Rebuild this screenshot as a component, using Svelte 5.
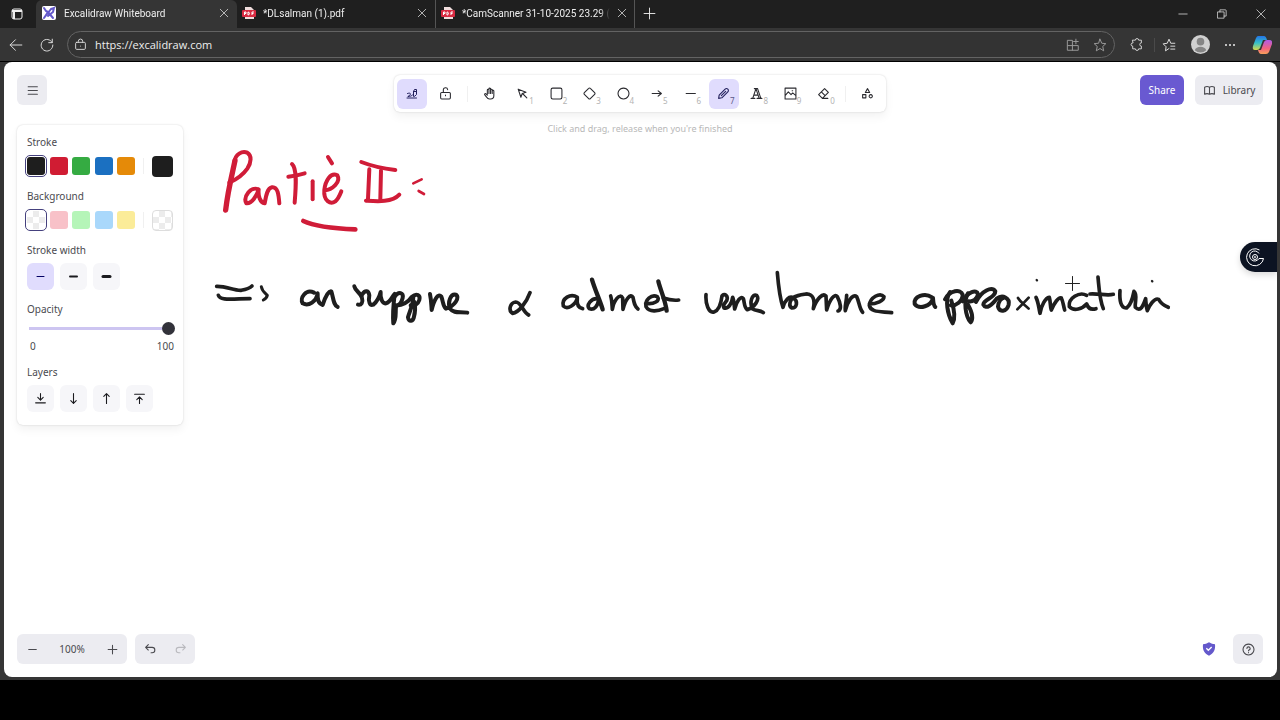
<script lang="ts">
	interface Stroke {
		d: string;
		w: number;
	}

	interface Scribble {
		x: number;
		y: number;
		color: string;
		label: string;
		strokes: Stroke[];
	}

	const pen = (w: number, ...paths: string[]): Stroke[] => paths.map((d) => ({ d, w }));

	// Tool state
	let activeTool = $state('draw');
	let penMode = $state(true);
	let opacity = $state(100);
	let strokeColor = $state('#1e1e1e');
	let background = $state('transparent');
	let strokeWidth = $state(1);
	let url = $state('https://excalidraw.com');

	const tabs = [
		{ title: 'Excalidraw Whiteboard', icon: 'logo', active: true },
		{ title: '*DLsalman (1).pdf', icon: 'pdf', active: false },
		{ title: '*CamScanner 31-10-2025 23.29 (', icon: 'pdf', active: false }
	];

	const tools = [
		{ id: 'select', key: '1', d: 'M4 4l5 15 2.500-7 7-2.500zM12 12l8 8' },
		{ id: 'rectangle', key: '2', d: 'M5 2h14a3 3 0 0 1 3 3v14a3 3 0 0 1-3 3h-14a3 3 0 0 1-3-3v-14a3 3 0 0 1 3-3z' },
		{ id: 'diamond', key: '3', d: 'M10.500 2.500L2.500 10.500a2 2 0 0 0 0 3L10.500 21.500a2 2 0 0 0 3 0L21.500 13.500a2 2 0 0 0 0-3L13.500 2.500a2 2 0 0 0-3 0z' },
		{ id: 'ellipse', key: '4', d: 'M12 2a10 10 0 1 0 .01 0z' },
		{ id: 'arrow', key: '5', d: 'M4 12h17M15 7l6 5-6 5' },
		{ id: 'line', key: '6', d: 'M4 12h17' },
		{ id: 'draw', key: '7', d: 'M3 21l1-6L15 4a3 3 0 0 1 5 5L9 20zM8 16l8-8' },
		{ id: 'text', key: '8', d: 'M2 21h7M13 21h9M5 21L11 3h3l6 18M11 3l6 18M8 15h7M8 3h6' },
		{ id: 'image', key: '9', d: 'M2 2h20v20h-20zM2 16l6-7 5 5 3-3 6 5M15 7h1' },
		{ id: 'eraser', key: '0', d: 'M10 21L3 14 14 3l7 7-11 11zM8 9l7 7M10 21h10' }
	];

	const strokeColors = ['#1e1e1e', '#d01c33', '#35ab42', '#1b70c1', '#e58a08'];
	const fillColors = ['transparent', '#f8c1c8', '#b5f5b8', '#a9d8fb', '#fbec99'];
	const widths = [1, 2, 4];

	const layers = [
		{ name: 'Send to back', d: 'M12 3v12M7 10l5 5 5-5M3 20h18' },
		{ name: 'Send backward', d: 'M12 3v18M7 16l5 5 5-5' },
		{ name: 'Bring forward', d: 'M12 21v-18M7 8l5-5 5 5' },
		{ name: 'Bring to front', d: 'M12 21v-12M7 14l5-5 5 5M3 4h18' }
	];

	// Freehand strokes, drawn at three units to the pixel
	const scribbles: Scribble[] = [
		{
			x: 196,
			y: 78,
			color: '#d01c38',
			label: 'Partie II :',
			strokes: [
				...pen(16, 'M105 62C97 100 84 150 77 210'),
				...pen(
					12,
					'M103 66C106 42 126 32 142 38C156 46 154 68 142 86C128 106 106 120 88 128',
					'M174 148C154 138 128 170 139 190C156 192 171 166 176 148C174 168 180 188 194 190C198 166 202 144 216 142C234 140 236 166 238 190',
					'M276 72C292 86 288 140 284 188',
					'M265 110C280 108 300 104 314 100',
					'M338 124L338 178',
					'M374 151C396 150 424 126 412 106C392 96 376 122 373 150C370 184 392 194 406 184C416 176 420 164 424 154',
					'M384 51L396 70',
					'M484 66C520 80 552 86 586 90',
					'M508 88L504 178',
					'M543 92L541 178',
					'M498 182C530 184 576 188 598 164'
				),
				...pen(8, 'M640 130L665 118', 'M656 153L672 162'),
				...pen(14, 'M310 243C350 262 410 266 466 268')
			]
		},
		{
			x: 196,
			y: 78,
			color: '#1e1e1e',
			label: '=> on suppose',
			strokes: [
				...pen(
					11,
					'M50 439C80 438 100 452 124 451C140 448 150 444 156 438',
					'M55 466C60 482 90 477 150 476'
				),
				...pen(9, 'M184 440C186 454 196 460 202 466C200 474 194 478 190 480'),
				...pen(
					12,
					'M342 458C318 446 298 474 308 490C326 500 350 484 353 460C352 480 356 492 368 495C376 470 386 452 394 454C400 472 400 496 413 501',
					'M463 439C466 454 484 460 486 474C490 487 484 496 474 494',
					'M486 464C496 448 506 452 508 466C504 486 510 498 520 494C532 484 540 464 542 456C540 476 548 492 558 490C572 486 576 470 584 462C580 496 578 526 580 550C590 540 586 518 588 500',
					'M584 470C596 452 612 458 608 474C604 490 596 498 586 496C606 498 626 486 636 470C650 458 662 466 658 480C654 494 642 498 632 496',
					'M640 470C640 494 628 516 624 532C626 548 640 544 642 530C646 516 646 500 644 486',
					'M690 462C694 480 694 494 695 510C702 480 714 458 724 470C730 484 728 498 738 506C764 498 780 474 768 464C752 460 742 486 750 506C762 522 780 514 802 518'
				)
			]
		},
		{
			x: 476,
			y: 198,
			color: '#1e1e1e',
			label: 'α admet',
			strokes: [
				...pen(
					11,
					'M150 98C140 126 116 158 98 160C84 152 90 128 107 126C124 126 128 156 146 165',
					'M292 112C272 98 244 116 250 138C262 150 286 136 292 114C290 132 294 144 308 146',
					'M352 116C334 114 318 136 328 146C342 152 354 138 356 118',
					'M392 108C396 120 396 134 397 148C402 120 420 98 428 114L429 148C436 118 452 98 459 112C462 128 464 140 474 147',
					'M497 130C522 134 542 122 532 110C514 102 494 120 498 140C508 158 534 154 552 146',
					'M550 114C568 120 582 122 596 120'
				),
				...pen(13, 'M336 59C345 90 358 116 368 148', 'M535 64C541 90 556 120 560 152')
			]
		},
		{
			x: 696,
			y: 198,
			color: '#1e1e1e',
			label: 'une bonne',
			strokes: pen(
				11,
				'M18 104C16 132 26 160 42 156C60 150 64 124 66 108C74 98 86 108 80 122C72 132 68 138 72 144C86 148 96 128 98 112C102 120 102 134 104 147C110 124 122 106 130 116C134 128 132 142 142 149C164 142 180 118 170 106C156 100 148 128 157 146C168 154 180 150 190 158',
				'M232 38C235 75 238 110 249 142C254 122 268 106 280 114C296 124 290 144 276 144C264 138 270 116 284 110C300 104 310 102 320 102',
				'M320 102C338 102 346 118 340 146C350 116 368 98 378 108L380 150C390 116 404 100 412 110C422 130 426 150 414 153',
				'M440 106C440 122 434 138 436 152C442 126 458 100 470 110C478 126 478 146 488 157',
				'M508 132C530 132 552 122 552 110C540 96 510 112 508 136C512 158 542 154 575 158'
			)
		},
		{
			x: 896,
			y: 168,
			color: '#1e1e1e',
			label: 'approximation',
			strokes: [
				...pen(
					12,
					'M96 202C74 186 40 200 44 222C58 240 94 228 99 204C100 216 100 226 106 231',
					'M150 186C134 210 142 252 158 280C168 262 162 236 154 212',
					'M135 208C150 180 182 176 188 194C188 214 168 228 152 226',
					'M204 190C190 214 196 258 212 277C222 264 214 242 204 224',
					'M188 214C204 184 230 178 234 192C232 208 218 216 206 214',
					'M228 216C244 182 276 168 286 184C286 204 250 208 250 224C258 240 276 224 290 206C308 192 330 204 326 224C320 246 298 248 294 230C296 212 302 206 314 202'
				),
				...pen(8, 'M354 204C362 218 374 224 386 236', 'M386 203C376 214 364 226 352 238'),
				...pen(
					11,
					'M408 202C416 218 416 234 420 250C424 226 436 204 448 202C452 216 450 228 454 240C462 220 476 200 484 204C490 216 490 228 494 240',
					'M560 196C538 184 504 204 508 230C522 246 548 236 560 222C566 238 576 240 588 236',
					'M594 141C597 170 598 206 610 236',
					'M570 192C596 190 620 198 640 193',
					'M660 182C658 210 662 236 680 234C694 224 698 204 702 184C714 194 704 214 706 232C722 248 730 226 737 206C738 218 738 230 742 242C748 226 764 202 776 208C784 222 790 226 805 232'
				),
				...pen(7, 'M410 150L411 151', 'M756 153L757 154')
			]
		}
	];
</script>

{#snippet icon(d: string, size = 13)}
	<svg class="icon" width={size} height={size} viewBox="0 0 24 24" aria-hidden="true"><path {d} /></svg>
{/snippet}

<div class="desktop">
	<div class="browser">
		<div class="tab-strip">
			<button class="workspaces" aria-label="Tab actions">
				<svg width="14" height="14" viewBox="0 0 14 14">
					<rect x="2" y="2" width="10" height="10" rx="2" fill="none" stroke="#eee" />
					<path d="M2 4h10M4 4v8" stroke="#eee" stroke-width="2" />
				</svg>
			</button>
			{#each tabs as tab}
				<div class="tab" class:active={tab.active}>
					{#if tab.icon === 'logo'}
						<svg class="favicon" width="14" height="14" viewBox="0 0 14 14">
							<rect width="14" height="14" rx="2" fill="#fff" />
							<path d="M2 2l2 3 2 1-2 3-2 3M12 2l-3 1-7 9M6 6l5 6M9 3l3-1-1 4-5 4" stroke="#6459cb" stroke-width="2" fill="none" stroke-linecap="round" />
						</svg>
					{:else}
						<svg class="favicon" width="14" height="14" viewBox="0 0 14 14">
							<path d="M3 1h6l3 3v9H3z" fill="#f1dede" />
							<rect x="0" y="4" width="14" height="7" rx="1" fill="#d92b42" />
							<path d="M2.500 9V6h1.500v1.500H2.500M6 6v3c2 0 2-3 0-3M10 9V6h2M10 7.500h1.500" stroke="#fff" fill="none" />
						</svg>
					{/if}
					<span class="tab-title">{tab.title}</span>
					<button class="tab-close" aria-label="Close tab">{@render icon('M3 3l18 18M21 3L3 21', 10)}</button>
				</div>
			{/each}
			<button class="new-tab" aria-label="New tab">{@render icon('M12 2v20M2 12h20', 13)}</button>
			<div class="window-buttons">
				<button aria-label="Minimize">{@render icon('M2 12h20', 10)}</button>
				<button aria-label="Restore">{@render icon('M2 7h15v15h-15zM7 7v-5h13a2 2 0 0 1 2 2v13h-5', 10)}</button>
				<button aria-label="Close">{@render icon('M2 2l20 20M22 2L2 22', 10)}</button>
			</div>
		</div>

		<div class="nav-bar">
			<button aria-label="Back">{@render icon('M22 12H2M11 3l-9 9 9 9', 14)}</button>
			<button aria-label="Refresh">{@render icon('M21 8a10 10 0 1 0 1 4M21 2v6h-6', 14)}</button>
			<label class="address">
				{@render icon('M8 8V6a4 4 0 0 1 8 0v2M5 8h14a2 2 0 0 1 2 2v9a2 2 0 0 1-2 2h-14a2 2 0 0 1-2-2v-9a2 2 0 0 1 2-2zM12 15h.01', 13)}
				<input aria-label="Address" bind:value={url} />
				<span class="dim">{@render icon('M3 4h8v17h-8zM3 13h18v8h-10M17 2v8M13 6h8', 14)}</span>
				<span class="dim">{@render icon('M12 2l3 7 7 .7-5.300 4.800 1.600 7.500-6.300-4-6.300 4 1.600-7.500L2 9.700 9 9z', 14)}</span>
			</label>
			<div class="nav-actions">
				<button aria-label="Extensions">{@render icon('M5 4h5a3 3 0 0 1 6 0h5v5a3 3 0 0 0 0 6v5h-5a3 3 0 0 1-6 0h-5v-5a3 3 0 0 1 0-6z', 13)}</button>
				<i></i>
				<button aria-label="Favorites">{@render icon('M22 9h-7l-3-7-3 7-7 1 5 5-1 7 6-4M15 14h7M15 19h7', 14)}</button>
				<button aria-label="Profile">
					<svg width="19" height="19" viewBox="0 0 20 20">
						<circle cx="10" cy="10" r="10" fill="#d0d0d0" />
						<circle cx="10" cy="7" r="4" fill="#858585" />
						<path d="M4 16c1-5 11-5 12 0a9 9 0 0 1-12 0z" fill="#858585" />
					</svg>
				</button>
				<button aria-label="Settings and more">
					<svg width="14" height="14" viewBox="0 0 14 14" fill="#eee"><circle cx="2" cy="7" r="1" /><circle cx="6" cy="7" r="1" /><circle cx="10" cy="7" r="1" /></svg>
				</button>
				<button aria-label="Copilot">
					<svg width="20" height="20" viewBox="0 0 20 20">
						<defs>
							<linearGradient id="cool" x1="0" y1="0" x2="0" y2="1"><stop offset="0" stop-color="#2474e8" /><stop offset=".5" stop-color="#36bfc7" /><stop offset="1" stop-color="#d8d84a" /></linearGradient>
							<linearGradient id="warm" x1="0" y1="0" x2="0" y2="1"><stop offset="0" stop-color="#b15be8" /><stop offset=".6" stop-color="#f2637e" /><stop offset="1" stop-color="#f8a05a" /></linearGradient>
						</defs>
						<path d="M6 1h6q2 0 3 4h-4L8 13q-1 2-3 2H3Q0 15 1 11L4 3q1-2 2-2z" fill="url(#cool)" />
						<path d="M14 19H9q-2 0-3-4h3l3-8q1-2 3-2h2q4 0 3 4l-3 8q-1 2-3 2z" fill="url(#warm)" />
					</svg>
				</button>
			</div>
		</div>

		<main class="canvas">
			<svg class="scene" role="img" aria-label="Drawing canvas">
				{#each scribbles as s}
					<g transform="translate({s.x} {s.y}) scale(0.3333)" stroke={s.color} aria-label={s.label}>
						{#each s.strokes as line}
							<path d={line.d} stroke-width={line.w} />
						{/each}
					</g>
				{/each}
				<path d="M1061.500 221.500h14M1068.500 214.500v14" stroke="#222" />
			</svg>

			<button class="menu soft" aria-label="Menu">{@render icon('M4 5h17M4 12h17M4 19h17')}</button>

			<div class="center">
				<div class="toolbar">
					<button class="tool" class:selected={penMode} aria-label="Pen mode" onclick={() => (penMode = !penMode)}>
						{@render icon('M2 20h19M3 11c5-2 8 0 4 4-3 2-4 2-3 2 4 0 7-1 9-3M15 16V7l2-4h4v10l-3 3zM15 7h5', 12)}
					</button>
					<button class="tool" aria-label="Keep tool active">
						{@render icon('M5 10h14a2 2 0 0 1 2 2v8a2 2 0 0 1-2 2h-14a2 2 0 0 1-2-2v-8a2 2 0 0 1 2-2zM8 10V6a4 4 0 0 1 8-1M12 15v1')}
					</button>
					<i class="divider"></i>
					<button class="tool" aria-label="Hand">
						{@render icon('M8 13V5.500a1.500 1.500 0 0 1 3 0V12M11 5.500v-2a1.500 1.500 0 0 1 3 0V12M14 5.500a1.500 1.500 0 0 1 3 0V12M17 7.500a1.500 1.500 0 0 1 3 0V16a6 6 0 0 1-6 6h-2c-3 0-4-1-5-3L3 14a1.500 1.500 0 0 1 2.500-1.500L8 15')}
					</button>
					{#each tools as tool}
						<button class="tool" class:selected={activeTool === tool.id} aria-label={tool.id} onclick={() => (activeTool = tool.id)}>
							{@render icon(tool.d)}
							<span class="key">{tool.key}</span>
						</button>
					{/each}
					<i class="divider"></i>
					<button class="tool" aria-label="More tools">{@render icon('M12 3l4 7h-8zM3 14h6v6h-6zM18 14a3 3 0 1 0 .01 0z')}</button>
				</div>
				<div class="hint">Click and drag, release when you're finished</div>
			</div>

			<div class="actions">
				<button class="share">Share</button>
				<button class="library soft">
					{@render icon('M3 19a9 9 0 0 1 9 0 9 9 0 0 1 9 0M3 6a9 9 0 0 1 9 0 9 9 0 0 1 9 0M3 6v13M12 6v13M21 6v13')}
					Library
				</button>
			</div>

			<aside class="panel">
				<section>
					<h3>Stroke</h3>
					<div class="color-row">
						<div class="swatches">
							{#each strokeColors as color}
								<button class="swatch" class:picked={strokeColor === color} style="background-color: {color}" aria-label={color} onclick={() => (strokeColor = color)}></button>
							{/each}
						</div>
						<i class="divider"></i>
						<button class="current" style="background-color: {strokeColor}" aria-label="Stroke color"></button>
					</div>
				</section>
				<section>
					<h3>Background</h3>
					<div class="color-row">
						<div class="swatches">
							{#each fillColors as color}
								<button
									class="swatch"
									class:picked={background === color}
									class:clear={color === 'transparent'}
									style="background-color: {color}"
									aria-label={color}
									onclick={() => (background = color)}
								></button>
							{/each}
						</div>
						<i class="divider"></i>
						<button class="current" class:clear={background === 'transparent'} style="background-color: {background}" aria-label="Background color"></button>
					</div>
				</section>
				<section>
					<h3>Stroke width</h3>
					<div class="buttons">
						{#each widths as w}
							<button class="option" class:selected={strokeWidth === w} aria-label="Width {w}" onclick={() => (strokeWidth = w)}>
								<svg width="13" height="13" viewBox="0 0 13 13"><path d="M3 6.500h7" stroke="currentColor" stroke-width={w === 4 ? 3 : w === 2 ? 2 : 1} stroke-linecap="round" /></svg>
							</button>
						{/each}
					</div>
				</section>
				<section class="opacity">
					<h3><label for="opacity">Opacity</label></h3>
					<input id="opacity" type="range" min="0" max="100" bind:value={opacity} />
					<div class="range-values"><span>0</span><span>{opacity}</span></div>
				</section>
				<section>
					<h3>Layers</h3>
					<div class="buttons">
						{#each layers as layer}
							<button class="option" aria-label={layer.name}>{@render icon(layer.d)}</button>
						{/each}
					</div>
				</section>
			</aside>

			<footer>
				<div class="zoom soft">
					<button aria-label="Zoom out">{@render icon('M5 12h14')}</button>
					<button class="percent">100%</button>
					<button aria-label="Zoom in">{@render icon('M12 4v16M4 12h16')}</button>
				</div>
				<div class="history soft">
					<button aria-label="Undo">{@render icon('M8 13L3 8l5-5M3 8h12a5 5 0 0 1 0 10h-2')}</button>
					<button aria-label="Redo" disabled>{@render icon('M16 13l5-5-5-5M21 8H9a5 5 0 0 0 0 10h2')}</button>
				</div>
				<a class="shield" href="#encryption" aria-label="End-to-end encryption">
					<svg width="16" height="16" viewBox="0 0 24 24"><path d="M12 2c3 2 6 3 9 3 1 8-2 14-9 17C5 19 2 13 3 5c3 0 6-1 9-3z" fill="#6459cb" /><path d="M8 11l3 3 5-5" fill="none" stroke="#fff" stroke-width="2" /></svg>
				</a>
				<button class="help soft" aria-label="Help">{@render icon('M12 2a10 10 0 1 0 .01 0zM9 10a3 3 0 1 1 4 3c-1 .5-1 1-1 1.500M12 17.500v.5')}</button>
			</footer>

			<button class="extension" aria-label="Screen recorder">
				<svg width="20" height="20" viewBox="0 0 20 20" fill="none" stroke="#fff">
					<path d="M14.500 3A8.500 8.500 0 1 0 18.500 11.500H14A5 5 0 1 1 14 6.500" />
					<circle cx="10" cy="10" r="2.500" />
					<circle cx="10" cy="10" r="0.5" fill="#fff" />
				</svg>
			</button>
		</main>
	</div>
</div>

<style>
	:global(body) {
		margin: 0;
		background: #000;
	}

	.desktop {
		box-sizing: border-box;
		min-height: 100vh;
		padding-bottom: 40px;
		display: flex;
		font-family: 'Noto Sans', sans-serif;
		font-size: 10px;
		color: #4a4a4f;
	}

	button {
		display: flex;
		align-items: center;
		justify-content: center;
		padding: 0;
		border: none;
		background: none;
		color: inherit;
		font: inherit;
		cursor: pointer;
	}

	.icon {
		display: block;
		flex: none;
		fill: none;
		stroke: currentColor;
		stroke-width: 2;
		stroke-linecap: round;
		stroke-linejoin: round;
	}

	.browser {
		flex: 1;
		min-width: 0;
		display: flex;
		flex-direction: column;
		background: #353535;
	}

	/* Browser chrome */
	.tab-strip {
		display: flex;
		height: 28px;
		background: #1f1f1f;
		color: #eee;
	}

	.workspaces {
		width: 34px;
		margin-right: 2px;
	}

	.tab {
		box-sizing: border-box;
		display: flex;
		align-items: center;
		gap: 7px;
		width: 199px;
		padding: 0 8px 2px 5px;
		border-right: 1px solid #555;
		background: #1f1f1f;
		font-family: Roboto, sans-serif;
		font-size: 10px;
	}

	.tab.active {
		gap: 8px;
		width: 201px;
		padding-left: 6px;
		border-right: none;
		border-radius: 6px 6px 0 0;
		background: #353535;
	}

	.favicon {
		flex: none;
	}

	.tab-title {
		flex: 1;
		white-space: nowrap;
		mask-image: linear-gradient(90deg, #000 93%, transparent);
	}

	.new-tab {
		width: 28px;
		height: 26px;
	}

	.window-buttons {
		display: flex;
		margin-left: auto;
	}

	.window-buttons button {
		width: 39px;
	}

	.nav-bar {
		display: flex;
		align-items: center;
		height: 33px;
		border-bottom: 1px solid #000;
		color: #ddd;
	}

	.tab-strip .icon,
	.nav-bar .icon {
		stroke-width: 1.7;
	}

	.nav-bar > button {
		width: 30px;
		margin-left: 1px;
	}

	.address {
		box-sizing: border-box;
		flex: 1;
		display: flex;
		align-items: center;
		gap: 8px;
		height: 27px;
		margin-left: 5px;
		padding: 0 7px 0 6px;
		border: 1px solid #636363;
		border-radius: 14px;
		background: #333;
	}

	.address input {
		flex: 1;
		min-width: 0;
		padding: 0;
		border: none;
		outline: none;
		background: none;
		color: #eee;
		font-family: 'Open Sans', sans-serif;
		font-size: 11px;
	}

	.dim {
		color: #999;
		margin-left: 5px;
	}

	.nav-actions {
		display: flex;
		align-items: center;
		gap: 5px;
		padding: 0 5px 0 8px;
	}

	.nav-actions button {
		width: 26px;
	}

	.nav-actions i {
		width: 1px;
		height: 14px;
		margin-right: -4px;
		background: #4a4a4a;
	}

	/* Whiteboard */
	.canvas {
		position: relative;
		flex: 1;
		display: grid;
		grid-template-columns: 1fr auto 1fr;
		grid-template-rows: auto 1fr auto;
		row-gap: 20px;
		margin: 0 3px 3px 4px;
		padding: 13px 14px 13px 13px;
		border-radius: 8px;
		background: #fff;
		overflow: hidden;
	}

	.scene {
		position: absolute;
		top: 0;
		left: 0;
		width: 100%;
		height: 100%;
		fill: none;
		stroke-linecap: round;
		stroke-linejoin: round;
	}

	.menu,
	.center,
	.actions,
	.panel,
	footer {
		position: relative;
	}

	.soft {
		border-radius: 6px;
		background: #ececf1;
	}

	.menu,
	.help {
		width: 30px;
		height: 30px;
	}

	.center {
		grid-row: 1 / 3;
		grid-column: 2;
		align-self: start;
		display: flex;
		flex-direction: column;
		align-items: center;
		gap: 10px;
	}

	.toolbar {
		box-sizing: border-box;
		display: flex;
		align-items: center;
		justify-content: space-between;
		width: 492px;
		height: 37px;
		padding: 3px;
		border-radius: 6px;
		background: #fff;
		box-shadow: 0 0 2px rgba(0, 0, 0, 0.17), 0 5px 10px rgba(0, 0, 0, 0.05);
	}

	.tool {
		position: relative;
		width: 30px;
		height: 30px;
		border-radius: 6px;
		color: #2b2b30;
	}

	.selected {
		background: #e0dcfd;
		color: #22205c;
	}

	.key {
		position: absolute;
		right: 4px;
		bottom: 3px;
		color: #b3b3b3;
		font-size: 8px;
		line-height: 10px;
	}

	.tool.selected .key {
		color: #5b5888;
	}

	.divider {
		width: 1px;
		height: 16px;
		margin: 0 3px;
		background: #f0f0f0;
	}

	.hint {
		color: #b8b8b8;
		font-size: 9px;
		line-height: 14px;
	}

	.actions {
		display: flex;
		justify-content: flex-end;
		gap: 11px;
		height: 30px;
	}

	.share {
		width: 44px;
		border-radius: 6px;
		background: #6959d1;
		color: #fff;
	}

	.library {
		gap: 7px;
		width: 68px;
	}

	.panel {
		grid-row: 2;
		grid-column: 1;
		align-self: start;
		box-sizing: border-box;
		display: flex;
		flex-direction: column;
		gap: 12px;
		width: 166px;
		padding: 10px 10px 13px;
		border-radius: 6px;
		background: #fff;
		box-shadow: 0 0 2px rgba(0, 0, 0, 0.17), 0 5px 10px rgba(0, 0, 0, 0.05);
	}

	h3 {
		margin: 0 0 6px;
		font-size: 10px;
		font-weight: 400;
		line-height: 14px;
	}

	.color-row {
		display: flex;
		align-items: center;
		justify-content: space-between;
		height: 22px;
	}

	.swatches {
		display: flex;
		justify-content: space-between;
		width: 108px;
	}

	.swatch {
		width: 18px;
		height: 18px;
		border-radius: 3px;
	}

	.picked {
		outline: 1px solid #45417e;
		outline-offset: 1px;
	}

	.current {
		width: 21px;
		height: 21px;
		border-radius: 4px;
	}

	.clear {
		background-image: conic-gradient(#ececec 25%, #fff 0 50%, #ececec 0 75%, #fff 0);
		background-size: 12px 12px;
	}

	.current.clear {
		border: 1px solid #ddd;
	}

	.buttons {
		display: flex;
		gap: 6px;
	}

	.option {
		width: 27px;
		height: 27px;
		border-radius: 6px;
		background: #f6f6f9;
		color: #1b1b1f;
	}

	.option.selected {
		background: #e0dcfd;
		color: #030064;
	}

	.opacity {
		margin-right: -2px;
	}

	.opacity input {
		display: block;
		width: 100%;
		height: 13px;
		margin: 0;
		appearance: none;
		background: linear-gradient(#cdc5f1, #cdc5f1) 2px center / 140px 3px no-repeat;
	}

	.opacity input::-webkit-slider-thumb {
		appearance: none;
		width: 13px;
		height: 13px;
		border-radius: 50%;
		background: #32323a;
	}

	.range-values {
		display: flex;
		justify-content: space-between;
		padding: 4px 1px 0 3px;
		line-height: 14px;
	}

	footer {
		grid-column: 1 / 4;
		display: flex;
		align-items: center;
		height: 30px;
	}

	.zoom,
	.history {
		display: flex;
		height: 30px;
	}

	.zoom button,
	.history button {
		width: 30px;
	}

	.zoom .percent {
		width: 50px;
	}

	.history {
		margin-left: 8px;
	}

	.history button:disabled {
		color: #b9b9be;
	}

	.shield {
		margin-left: auto;
		margin-right: 16px;
		height: 16px;
	}

	.extension {
		position: absolute;
		top: 180px;
		right: 0;
		width: 37px;
		height: 30px;
		padding-right: 8px;
		border-radius: 15px 0 0 15px;
		background: #0c1322;
		box-shadow: 0 3px 6px rgba(0, 0, 0, 0.15);
	}
</style>
